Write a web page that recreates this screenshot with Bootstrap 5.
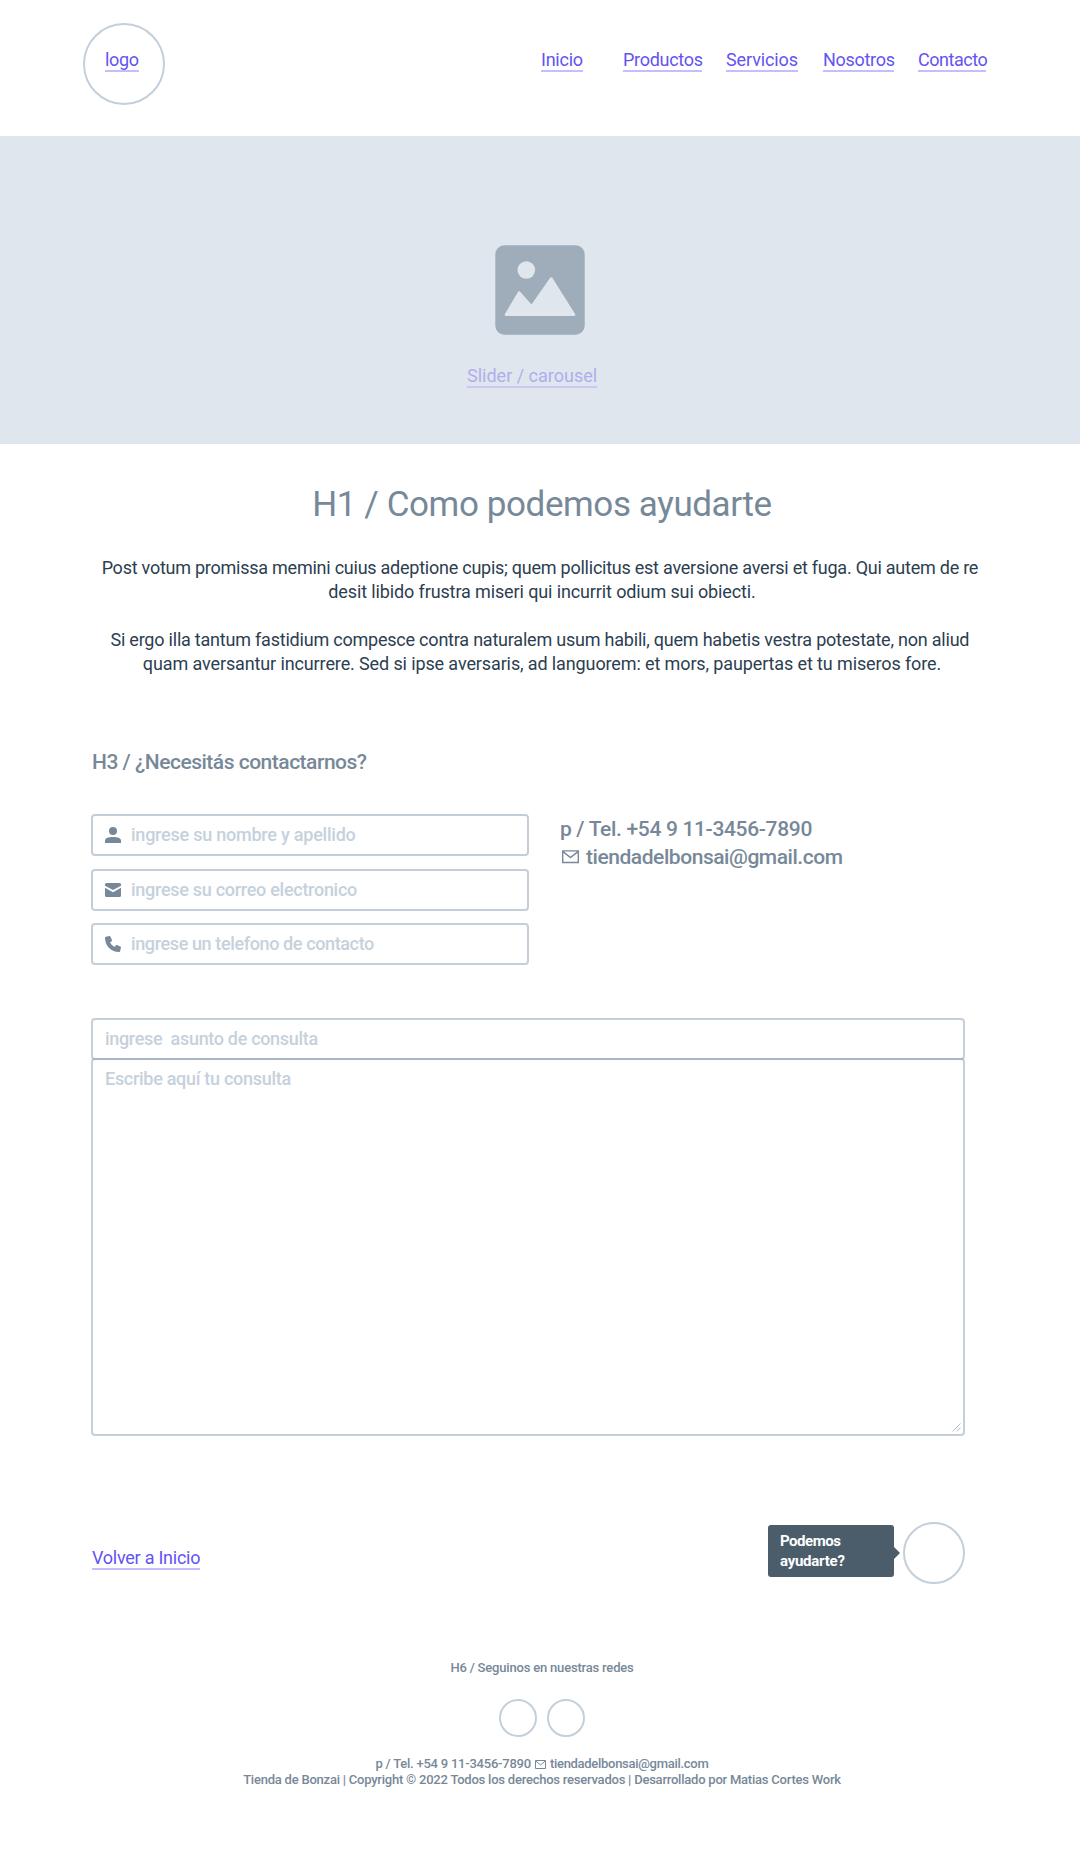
<!DOCTYPE html>
<html lang="es">
<head>
<meta charset="utf-8">
<meta name="viewport" content="width=device-width, initial-scale=1">
<title>Tienda de Bonsai - Contacto</title>
<link href="https://cdn.jsdelivr.net/npm/bootstrap@5.3.0/dist/css/bootstrap.min.css" rel="stylesheet">
<style>
body{font-family:Roboto,"Open Sans",sans-serif;font-size:18px;line-height:24px;color:#2c3e50;background:#fff;overflow-x:hidden}
svg{display:block;flex:none}
.site-head{height:136px;padding:23px 0 0 83px}
.ring{border:2px solid #c3cfdb;border-radius:50%;flex:none}
.logo-ring{width:82px;height:82px;padding:25px 0 0 20px}
.site-nav{margin:27px 0 0 376px}
.wire-link{display:inline-block;white-space:nowrap;font-weight:400;line-height:20px;height:22px;color:#6353f2;border-bottom:2px solid #c5bdfd;text-decoration:none}
.w-logo{width:34px;letter-spacing:-.3px}.w-ini{width:42px;margin-right:40px;letter-spacing:-.25px}.w-pro{width:79px;margin-right:24px;letter-spacing:-.28px}.w-ser{width:72px;margin-right:25px;letter-spacing:-.12px}.w-nos{width:71px;margin-right:24px;letter-spacing:-.3px}.w-con{width:68px;letter-spacing:-.45px}.w-back{width:108px;margin:26px auto 0 1px;letter-spacing:-.25px}
.w-slide{width:130px;opacity:.38;margin:31px 16px 0 0;letter-spacing:0;border-bottom-color:#a79cfa}
.hero{height:308px;background:#dfe6ed;padding-top:109px}
.main-col{width:874px;margin-left:91px}
.intro{width:902px;white-space:nowrap}
.title-xl{font-size:35px;line-height:44px;font-weight:400;color:#778899;letter-spacing:-.4px;margin:0;padding:39px 0 29px}
.copy-a{letter-spacing:-.245px}.copy-b{letter-spacing:-.12px}.copy-c{letter-spacing:-.215px}.copy-d{letter-spacing:-.12px}
.title-md{font-size:21px;line-height:28px;font-weight:500;color:#778899;letter-spacing:-.49px;margin:72px 0 38px 1px}
.field-col{width:438px}
.field{height:42px;border:2px solid #c3ced8;border-radius:4px;padding-left:12px;gap:10px;color:#778899}
.field+.field{margin-top:13px}.field:last-child{margin-top:12px}
.form-control,.form-control:focus{font-size:18px;font-weight:500;line-height:24px;background:transparent;box-shadow:none}
.form-control::placeholder{color:#c5d1dc;opacity:1}
.ph-1{letter-spacing:-.23px}.ph-2{letter-spacing:-.28px}.ph-3{letter-spacing:-.38px}.ph-4{letter-spacing:-.32px}.ph-5{letter-spacing:-.29px}
.reach{margin:1px 0 0 31px;font-size:21px;line-height:28px;font-weight:500;color:#778899;white-space:nowrap;letter-spacing:-.33px}
.reach-mail{letter-spacing:-.45px;gap:7px;padding-left:2px}
.query{margin-top:53px}
.query .form-control{border:2px solid rgba(135,159,181,.5);border-radius:4px;padding:7px 12px}
.query .q-line{height:42px;padding:6px 12px 8px}
.q-area{height:378px;margin-top:-2px;resize:none;display:block}
.grip{position:absolute;right:4px;bottom:4px}
.help-row{margin-top:86px}
.tip{position:relative;width:126px;height:52px;margin:3px 9px 0 0;padding:6px 12px;background:#4b5d6b;border-radius:3px;color:#fff;font-size:15px;line-height:20px;font-weight:700;letter-spacing:-.46px}
.tip::after{content:"";position:absolute;left:100%;top:22px;border:6px solid transparent;border-left-color:#4b5d6b;border-right:0}
.tip span{letter-spacing:-.25px}
.help-ring{width:62px;height:62px}
.foot{font-size:13px;line-height:16px;font-weight:500;color:#778899;margin-top:76px}
.foot-head{font-size:13px;line-height:16px;font-weight:500;letter-spacing:-.19px;margin:0 0 23px}
.social{gap:10px;margin-bottom:19px}
.social .ring{width:38px;height:38px}
.foot-icon{margin:0 4px 0 4px}
.foot-phone{letter-spacing:-.23px}.foot-mail{letter-spacing:-.29px}.foot-legal{letter-spacing:-.225px}
</style>
<script src="https://cdn.jsdelivr.net/npm/bootstrap@5.3.0/dist/js/bootstrap.bundle.min.js"></script>
</head>
<body>
<header class="site-head d-flex align-items-start">
  <div class="ring logo-ring"><a class="wire-link w-logo d-block" href="#">logo</a></div>
  <nav class="site-nav d-flex">
    <a class="wire-link w-ini" href="#">Inicio</a>
    <a class="wire-link w-pro" href="#">Productos</a>
    <a class="wire-link w-ser" href="#">Servicios</a>
    <a class="wire-link w-nos" href="#">Nosotros</a>
    <a class="wire-link w-con" href="#">Contacto</a>
  </nav>
</header>
<section class="hero d-flex flex-column align-items-center">
  <svg width="90" height="90" viewBox="0 0 90 90"><rect x=".3" y=".3" width="89.400" height="89.400" rx="9" fill="#9eadb9"/><circle cx="31.3" cy="25" r="8.8" fill="#dfe6ed"/><path d="M11 69.7 24.2 47.500 36.700 61.500 56.200 33.500 79 69.700z" fill="#dfe6ed" stroke="#dfe6ed" stroke-width="2.600" stroke-linejoin="round"/></svg>
  <a class="wire-link w-slide" href="#">Slider / carousel</a>
</section>
<main class="main-col">
  <div class="intro text-center">
    <h1 class="title-xl">H1 / Como podemos ayudarte</h1>
    <p class="mb-4"><span class="copy-a">Post votum promissa memini cuius adeptione cupis; quem pollicitus est aversione aversi et fuga. Qui autem de re&nbsp;</span><br><span class="copy-b">desit libido frustra miseri qui incurrit odium sui obiecti.</span></p>
    <p class="mb-0"><span class="copy-c">Si ergo illa tantum fastidium compesce contra naturalem usum habili, quem habetis vestra potestate, non aliud&nbsp;</span><br><span class="copy-d">quam aversantur incurrere. Sed si ipse aversaris, ad languorem: et mors, paupertas et tu miseros fore.</span></p>
  </div>
  <h3 class="title-md">H3 / ¿Necesitás contactarnos?</h3>
  <form>
    <div class="d-flex align-items-start">
      <div class="field-col">
        <div class="field d-flex align-items-center">
          <svg width="16" height="16" viewBox="0 0 16 16" fill="currentColor"><circle cx="8" cy="4" r="4"/><path d="M0 16v-2.200C0 11 3.500 10 8 10s8 1 8 3.800V16z"/></svg>
          <input class="form-control border-0 p-0 ph-1" placeholder="ingrese su nombre y apellido">
        </div>
        <div class="field d-flex align-items-center">
          <svg width="16" height="16" viewBox="0 0 16 16" fill="currentColor"><path d="M1.500 1h13A1.500 1.500 0 0 1 16 2.500V3.700L8 8 0 3.700V2.500A1.500 1.500 0 0 1 1.500 1z"/><path d="M0 5.800 8 10.200 16 5.800V13.500A1.500 1.500 0 0 1 14.500 15h-13A1.500 1.500 0 0 1 0 13.500z"/></svg>
          <input class="form-control border-0 p-0 ph-2" placeholder="ingrese su correo electronico">
        </div>
        <div class="field d-flex align-items-center">
          <svg width="16" height="16" viewBox="0 0 16 16" fill="currentColor"><path d="M15.300 10.500 12 9.100c-.4-.2-.9-.1-1.200.3L9.600 11A11.500 11.500 0 0 1 5 6.400l1.600-1.200c.4-.3.5-.8.3-1.200L5.500.7C5.300.2 4.800 0 4.300.1L.9.8C.4.900 0 1.300 0 1.900 0 9.700 6.300 16 14.100 16c.6 0 1-.4 1.100-.9l.7-3.400c.2-.5-.1-1-.6-1.200z"/></svg>
          <input class="form-control border-0 p-0 ph-3" placeholder="ingrese un telefono de contacto">
        </div>
      </div>
      <div class="reach">
        <div>p / Tel. +54 9 11-3456-7890</div>
        <div class="reach-mail d-flex align-items-center">
          <svg width="17" height="14" viewBox="0 0 17 14" fill="none" stroke="currentColor" stroke-width="1.400"><path d="M.7.900h15.600v11.600H.7zM1 1.600l7.500 6 7.500-6"/></svg>
          <span>tiendadelbonsai@gmail.com</span>
        </div>
      </div>
    </div>
    <div class="query position-relative">
      <input class="form-control q-line ph-4" placeholder="ingrese&nbsp; asunto de consulta">
      <textarea class="form-control q-area ph-5" placeholder="Escribe aquí tu consulta"></textarea>
      <svg class="grip" width="9" height="9" viewBox="0 0 9 9" fill="none" stroke="#b5c0ca"><path d="M.5 8.500l8-8M4.500 8.500l4-4"/></svg>
    </div>
  </form>
  <div class="help-row d-flex align-items-start">
    <a class="wire-link w-back" href="#">Volver a Inicio</a>
    <div class="tip">Podemos<br><span>ayudarte?</span></div>
    <div class="ring help-ring"></div>
  </div>
</main>
<footer class="foot text-center ps-1">
  <h6 class="foot-head">H6 / Seguinos en nuestras redes</h6>
  <div class="social d-flex justify-content-center"><div class="ring"></div><div class="ring"></div></div>
  <div class="d-flex justify-content-center align-items-center"><span class="foot-phone">p / Tel. +54 9 11-3456-7890</span>
    <svg class="foot-icon" width="11" height="9" viewBox="0 0 11 9" fill="none" stroke="currentColor"><path d="M.5.500h10v8H.5zM.8 1l4.700 4L10.200 1"/></svg>
    <span class="foot-mail">tiendadelbonsai@gmail.com</span></div>
  <div class="foot-legal">Tienda de Bonzai | Copyright © 2022 Todos los derechos reservados | Desarrollado por Matias Cortes Work</div>
</footer>
</body>
</html>
